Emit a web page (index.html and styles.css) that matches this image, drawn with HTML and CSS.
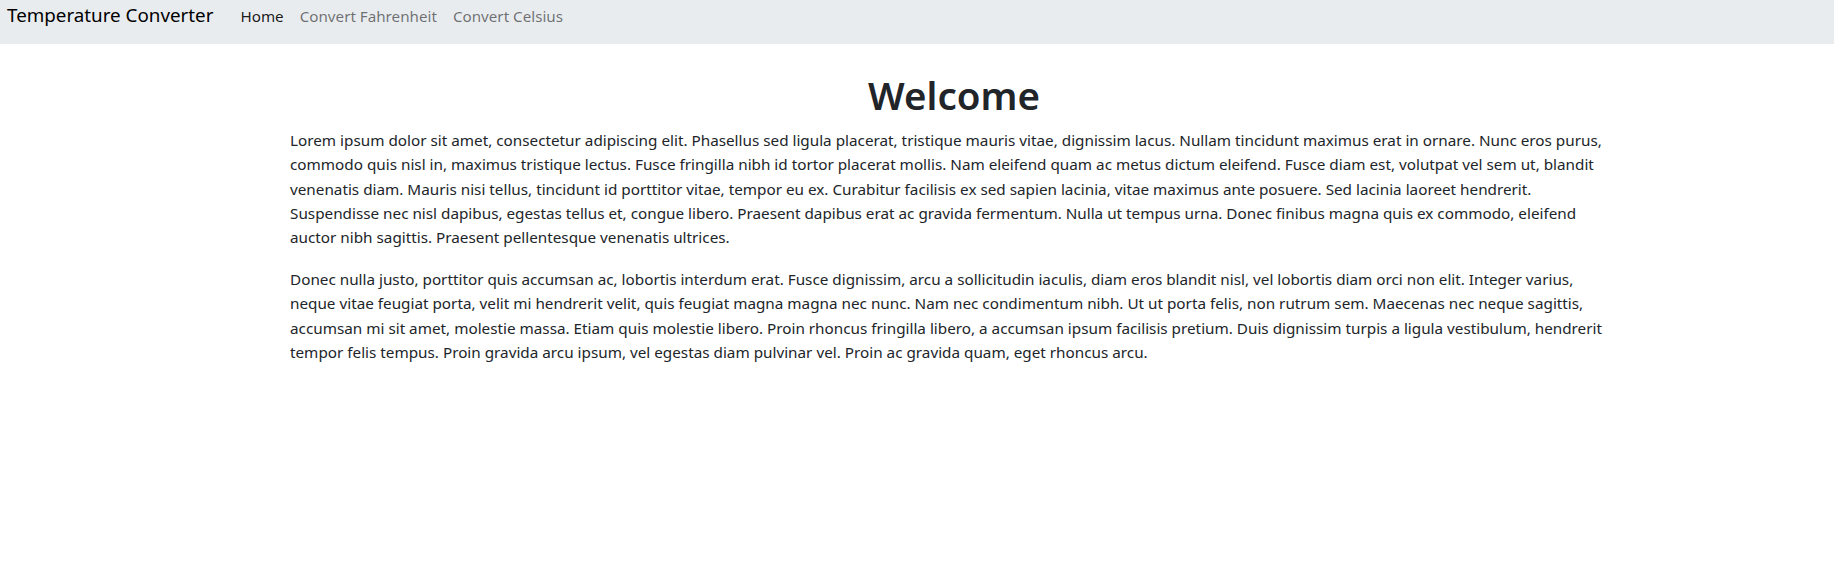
FILE: index.html
```html
<!DOCTYPE html>
<html lang="en">
<head>
<meta charset="utf-8">
<title>Temperature Converter</title>
<link rel="stylesheet" href="styles.css">
</head>
<body>
<header class="navbar">
  <a class="brand" href="#">Temperature Converter</a>
  <nav class="nav">
    <a class="nav-link active" href="#">Home</a>
    <a class="nav-link" href="#">Convert Fahrenheit</a>
    <a class="nav-link" href="#">Convert Celsius</a>
  </nav>
</header>
<main class="content">
  <h1 class="title">Welcome</h1>
  <p class="text">Lorem ipsum dolor sit amet, consectetur adipiscing elit. Phasellus sed ligula placerat, tristique mauris vitae, dignissim lacus. Nullam tincidunt maximus erat in ornare. Nunc eros purus, commodo quis nisl in, maximus tristique lectus. Fusce fringilla nibh id tortor placerat mollis. Nam eleifend quam ac metus dictum eleifend. Fusce diam est, volutpat vel sem ut, blandit venenatis diam. Mauris nisi tellus, tincidunt id porttitor vitae, tempor eu ex. Curabitur facilisis ex sed sapien lacinia, vitae maximus ante posuere. Sed lacinia laoreet hendrerit. Suspendisse nec nisl dapibus, egestas tellus et, congue libero. Praesent dapibus erat ac gravida fermentum. Nulla ut tempus urna. Donec finibus magna quis ex commodo, eleifend auctor nibh sagittis. Praesent pellentesque venenatis ultrices.</p>
  <p class="text">Donec nulla justo, porttitor quis accumsan ac, lobortis interdum erat. Fusce dignissim, arcu a sollicitudin iaculis, diam eros blandit nisl, vel lobortis diam orci non elit. Integer varius, neque vitae feugiat porta, velit mi hendrerit velit, quis feugiat magna magna nec nunc. Nam nec condimentum nibh. Ut ut porta felis, non rutrum sem. Maecenas nec neque sagittis, accumsan mi sit amet, molestie massa. Etiam quis molestie libero. Proin rhoncus fringilla libero, a accumsan ipsum facilisis pretium. Duis dignissim turpis a ligula vestibulum, hendrerit tempor felis tempus. Proin gravida arcu ipsum, vel egestas diam pulvinar vel. Proin ac gravida quam, eget rhoncus arcu.</p>
</main>
</body>
</html>
```
FILE: styles.css
```css
* { box-sizing: border-box; }
html, body { margin: 0; padding: 0; background: #fff; }
body {
  font-family: "Noto Sans", "Open Sans", sans-serif;
  color: #212529;
}
.navbar {
  display: flex;
  align-items: flex-start;
  height: 44px;
  padding: 0 0 0 7px;
  background: #e9ecef;
}
.brand {
  margin: 1px 19px 0 0;
  font-size: 18.8px;
  line-height: 28px;
  color: #000;
  text-decoration: none;
}
.nav { display: flex; margin-top: 4px; }
.nav-link {
  font-size: 15.2px;
  line-height: 24px;
  padding: 0 8px;
  color: rgba(0, 0, 0, 0.55);
  text-decoration: none;
}
.nav-link.active { color: rgba(0, 0, 0, 0.9); }
.content {
  width: 1328px;
  margin-left: 290px;
  padding-top: 28px;
}
.title {
  margin: 0 0 10px;
  font-size: 38.5px;
  font-weight: 600;
  line-height: 1.2;
  text-align: center;
}
.text {
  margin: 0 0 17.5px;
  font-size: 15.27px;
  line-height: 24.3px;
}
```
